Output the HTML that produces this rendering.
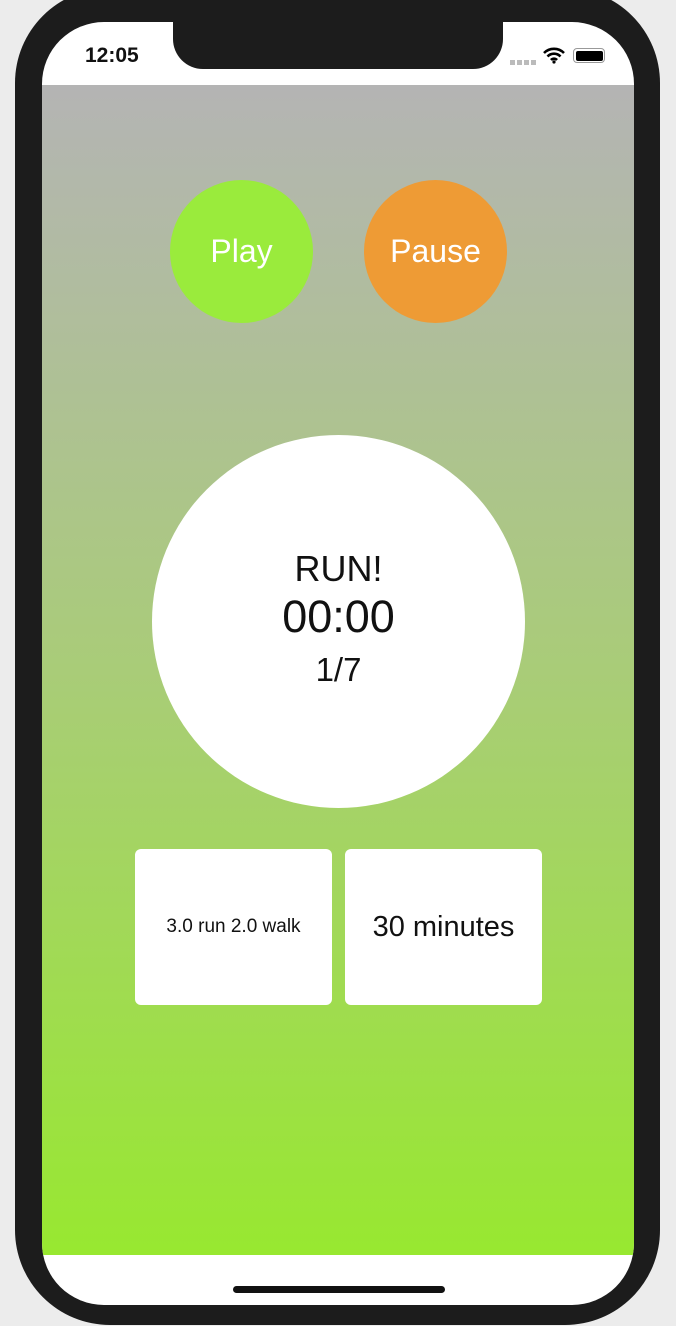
<!DOCTYPE html>
<html><head><style>
body{margin:0;width:676px;height:1326px;background:#ececec;position:relative;overflow:hidden;font-family:"Liberation Sans",sans-serif}
.frame{position:absolute;left:15px;top:-12px;width:645px;height:1337px;background:#1c1c1c;border-radius:95px}
.screen{position:absolute;left:42px;top:22px;width:592px;height:1283px;background:#fff;border-radius:62px;overflow:hidden}
.notch{position:absolute;left:131px;top:0;width:330px;height:47px;background:#1c1c1c;border-radius:0 0 30px 30px}
.grad{position:absolute;left:0;top:63px;width:592px;height:1170px;background:linear-gradient(#b4b4b4,#a9cc78 50%,#98e830)}
.c{position:absolute;border-radius:50%;display:flex;align-items:center;justify-content:center;color:#fff;font-size:32px}
.box{position:absolute;top:827px;width:197px;height:156px;background:#fff;border-radius:6px;display:flex;align-items:center;justify-content:center;color:#111}
</style></head><body>
<div class="frame"></div>
<div class="screen">
<div class="grad"></div>
<div class="notch"></div>
<div style="position:absolute;left:43px;top:22px;font-size:21px;font-weight:bold;color:#111">12:05</div>
<div style="position:absolute;left:468px;top:38px;width:26px;height:5px;background:repeating-linear-gradient(90deg,#bbb 0 5px,transparent 5px 7px)"></div>
<svg style="position:absolute;left:500px;top:24px" width="24" height="18" viewBox="0 0 24 18"><path d="M2 7a14 14 0 0 1 20 0M5.5 10.5a9 9 0 0 1 13 0M9 14a4 4 0 0 1 6 0" stroke="#000" stroke-width="2.6" fill="none"/><circle cx="12" cy="16" r="1.6"/></svg>
<div style="position:absolute;left:531px;top:26px;width:32px;height:15px;border:1.5px solid #999;border-radius:4px;padding:1.5px;box-sizing:border-box"><div style="width:100%;height:100%;background:#000;border-radius:2px"></div></div>
<div class="c" style="left:128px;top:158px;width:143px;height:143px;background:#9aeb3c">Play</div>
<div class="c" style="left:322px;top:158px;width:143px;height:143px;background:#ee9b35">Pause</div>
<div class="c" style="left:110px;top:413px;width:373px;height:373px;background:#fff;color:#111;flex-direction:column">
<div style="font-size:36px;line-height:44px">RUN!</div>
<div style="font-size:45px;line-height:52px">00:00</div>
<div style="font-size:33px;line-height:54px">1/7</div></div>
<div class="box" style="left:93px;font-size:19px">3.0 run 2.0 walk</div>
<div class="box" style="left:303px;font-size:29px">30 minutes</div>
<div style="position:absolute;left:191px;top:1264px;width:212px;height:7px;background:#111;border-radius:4px"></div>
</div>
</body></html>
